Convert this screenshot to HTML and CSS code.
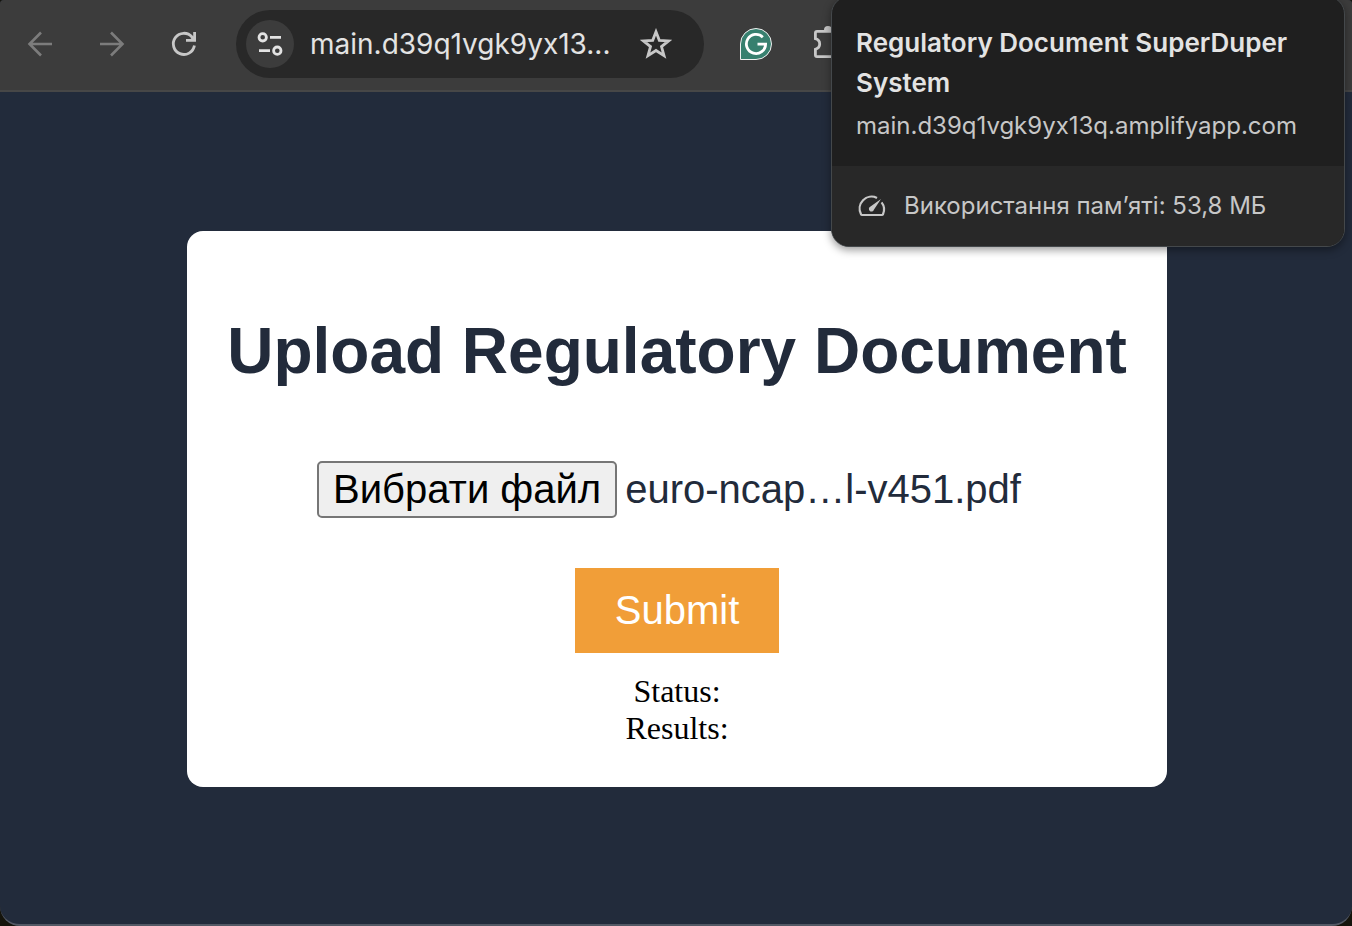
FILE: index.html
```html
<!DOCTYPE html>
<html lang="uk">
<head>
<meta charset="utf-8">
<title>Regulatory Document SuperDuper System</title>
<link rel="stylesheet" href="styles.css">
</head>
<body>
<div class="window">
  <header class="toolbar">
    <nav class="nav">
      <button class="icon-button dim" type="button" aria-label="Back">
        <svg width="32" height="32" viewBox="0 0 32 32" fill="none" stroke="currentColor" stroke-width="2.6"><path d="M28 16H6M17 4.5L5.5 16L17 27.5"/></svg>
      </button>
      <button class="icon-button dim" type="button" aria-label="Forward">
        <svg width="32" height="32" viewBox="0 0 32 32" fill="none" stroke="currentColor" stroke-width="2.6"><path d="M4 16h22M15 4.5L26.5 16L15 27.5"/></svg>
      </button>
      <button class="icon-button" type="button" aria-label="Reload">
        <svg width="32" height="32" viewBox="0 0 32 32" fill="none" stroke="currentColor" stroke-width="2.8"><path d="M26.4 17.5A10.6 10.6 0 1 1 24 9L26 11.5"/><path d="M28 4V13.7H18V11H22.5L25.2 8.500V4Z" fill="currentColor" stroke="none"/></svg>
      </button>
    </nav>
    <div class="address">
      <button class="site-info" type="button" aria-label="Site information">
        <svg width="32" height="32" viewBox="0 0 32 32" fill="none" stroke="currentColor" stroke-width="2.8"><circle cx="8.7" cy="9.3" r="3.7"/><path d="M16 9.3h11M5 22.7h11"/><circle cx="23.3" cy="22.7" r="3.7"/></svg>
      </button>
      <input class="url" type="text" aria-label="Address" value="main.d39q1vgk9yx13..." readonly>
      <button class="star" type="button" aria-label="Bookmark">
        <svg width="32" height="32" viewBox="0 0 32 32" fill="none" stroke="currentColor" stroke-width="2.8"><path d="M16 3.8L19.3 12.3L28.600 12.9L21.5 18.6L24 27.6L16 22.5L8 27.6L10.5 18.6L3.4 12.9L12.7 12.3Z"/></svg>
      </button>
    </div>
    <div class="extensions">
      <button class="icon-button" type="button" aria-label="Grammarly">
        <svg width="32" height="32" viewBox="0 0 32 32" fill="none"><path d="M.5 31.5V16A15.5 15.5 0 1 1 16 31.5Z" fill="#37806f" stroke="#f0f0f0"/><path d="M22.8 9.2A9.6 9.600 0 1 0 25.600 16.200H17.500" stroke="#fff" stroke-width="2.8"/></svg>
      </button>
      <button class="icon-button" type="button" aria-label="Extensions">
        <svg class="puzzle" width="32" height="32" viewBox="0 0 32 32" fill="none" stroke="currentColor" stroke-width="2.8"><path d="M12 3.300V2A4 4 0 0 1 20 2V3.300Z" fill="currentColor" stroke="none"/><path d="M5 3.300H27V12a4 4 0 0 1 0 8V28.600H5Q3.400 28.600 3.400 27V21.300Q7.700 20 7.700 16Q7.700 12 3.400 10.700V5Q3.400 3.300 5 3.300Z"/></svg>
      </button>
    </div>
  </header>
  <main class="page">
    <section class="card">
      <h1 class="title">Upload Regulatory Document</h1>
      <form class="form">
        <div class="file">
          <input class="file-input" id="document" type="file">
          <label class="file-button" for="document">Вибрати файл</label>
          <span class="file-name">euro-ncap…l-v451.pdf</span>
        </div>
        <button class="submit" type="button">Submit</button>
      </form>
      <div class="result">Status:</div>
      <div class="result">Results:</div>
    </section>
  </main>
  <aside class="tab-card" role="tooltip">
    <div class="tab-info">
      <div class="tab-title">Regulatory Document SuperDuper System</div>
      <div class="tab-domain">main.d39q1vgk9yx13q.amplifyapp.com</div>
    </div>
    <div class="tab-memory">
      <svg width="32" height="32" viewBox="0 0 32 32" fill="none" stroke="currentColor" stroke-width="2.2"><path d="M21 8A12 12 0 0 0 5 24.300Q5.300 25 6.200 25H25.800Q26.700 25 27 24.300A12 12 0 0 0 25.600 12.300"/><path d="M25 9L18 19.500A2.600 2.600 0 1 1 14.500 16.500Z" fill="currentColor" stroke="none"/></svg>
      <span>Використання пам’яті: 53,8 МБ</span>
    </div>
  </aside>
</div>
</body>
</html>
```
FILE: styles.css
```css
* {
  box-sizing: border-box;
}

body {
  margin: 0;
  background: #15140c;
  font-family: "Liberation Serif", serif;
}

button {
  border: 0;
  padding: 0;
  background: none;
  color: inherit;
}

svg {
  display: block;
}

.window {
  position: relative;
  display: flex;
  flex-direction: column;
  min-height: 100vh;
  overflow: hidden;
  border-bottom: 2px solid #535965;
  border-radius: 4px 4px 20px 20px;
  background: #222b3b;
}

.toolbar {
  display: flex;
  align-items: center;
  gap: 24px;
  padding: 10px 12px 12px;
  border-bottom: 2px solid #474747;
  background: #3c3c3c;
  color: #c7c7c7;
}

.nav,
.extensions {
  display: flex;
  gap: 16px;
}

.icon-button {
  display: grid;
  place-items: center;
  width: 56px;
  height: 56px;
}

.dim {
  color: #7c7c7c;
}

.puzzle {
  overflow: visible;
}

.address {
  display: flex;
  align-items: center;
  flex: 0 1 468px;
  min-width: 0;
  padding: 10px 32px 10px 10px;
  border-radius: 34px;
  background: #282828;
}

.site-info {
  display: grid;
  place-items: center;
  flex: none;
  width: 48px;
  height: 48px;
  border-radius: 50%;
  background: #3c3c3c;
  color: #e3e3e3;
}

.url {
  flex: 1;
  min-width: 0;
  padding: 0 0 0 16px;
  border: 0;
  outline: 0;
  background: none;
  color: #e3e3e3;
  font: 28px Inter, sans-serif;
}

.star {
  flex: none;
}

.extensions {
  margin-right: auto;
}

.page {
  display: grid;
  flex: 1;
  place-items: center;
  padding: 2px 0 0 2px;
}

.card {
  padding: 40px;
  border-radius: 16px;
  background: #fff;
  color: #000;
  text-align: center;
}

.title {
  margin: 43px 0;
  color: #222b3b;
  font: bold 64px/74px "Liberation Sans", sans-serif;
}

.form {
  display: flex;
  flex-direction: column;
  align-items: center;
  gap: 50px;
  padding: 30px 0 20px;
  font: 40px/45px "Liberation Sans", sans-serif;
}

.file {
  display: flex;
  align-items: center;
  gap: 8px;
  margin-right: 16px;
  color: #222b3b;
}

.file-input {
  position: absolute;
  width: 1px;
  height: 1px;
  opacity: 0;
}

.file-button {
  padding: 4px 14px;
  border: 2px solid #767676;
  border-radius: 5px;
  background: #efefef;
  color: #000;
}

.submit {
  padding: 20px 40px;
  background: #f19e38;
  color: #fff;
  font: inherit;
}

.result {
  font-size: 32px;
  line-height: 37px;
}

.tab-card {
  position: absolute;
  top: -4px;
  right: 7px;
  width: 514px;
  overflow: hidden;
  border: 1px solid #44484b;
  border-radius: 18px;
  background: #1f1f1f;
  box-shadow: 0 3px 8px rgba(0, 0, 0, 0.4);
  font-family: Inter, sans-serif;
}

.tab-info {
  padding: 26px 24px 20px;
}

.tab-title {
  color: #e3e3e3;
  font-size: 26px;
  font-weight: 600;
  line-height: 40px;
}

.tab-domain {
  padding: 3px 0 1px;
  color: #c7c7c7;
  font-size: 24px;
  line-height: 39px;
}

.tab-memory {
  display: flex;
  align-items: center;
  gap: 16px;
  padding: 20px 24px;
  background: #282828;
  color: #c7c7c7;
  font-size: 24px;
  line-height: 40px;
}
```
